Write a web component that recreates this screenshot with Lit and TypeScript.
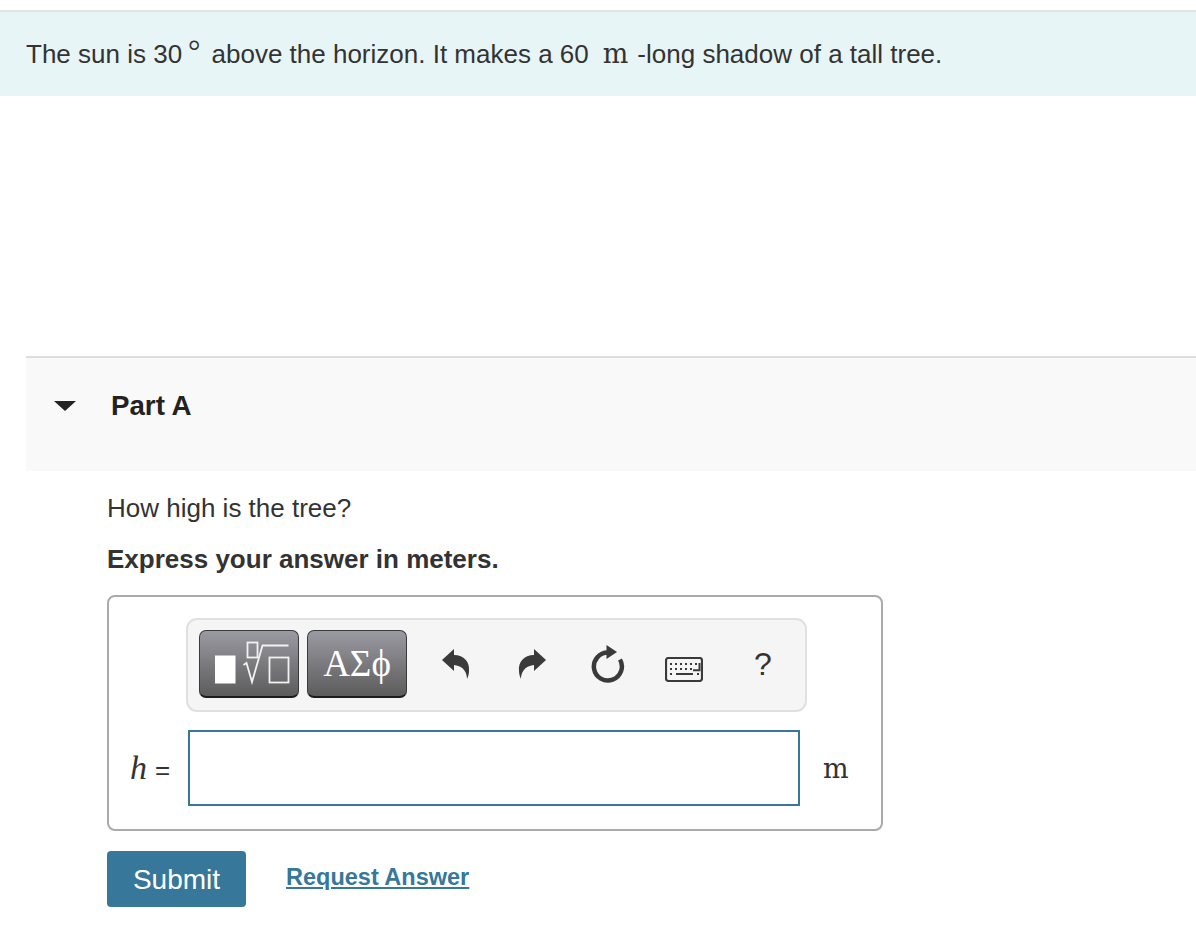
import { LitElement, html, css } from "lit";
import { customElement } from "lit/decorators.js";

@customElement("app-root")
export class AppRoot extends LitElement {
  static styles = css`
    :host { display: block; width: 1196px; height: 936px; overflow: hidden; background: #fff; padding-top: 10px; box-sizing: border-box; font-family: "Liberation Sans", Arial, sans-serif; color: #333; font-size: 26px; }
    .intro { border-top: 2px solid #e2e2e4; background: #e8f5f7; padding-left: 26px; display: flex; align-items: center; white-space: pre; line-height: 28px; box-sizing: border-box; height: 86px; }
    .deg { font-family: "Liberation Serif", serif; font-size: 31px; position: relative; top: -2px; margin-left: 6px; margin-right: 11px; }
    .mu { font-family: "DejaVu Serif", serif; font-size: 27px; margin-left: 14px; margin-right: 9px; }
    .part { margin: 260px 0 0 26px; height: 115px; box-sizing: border-box; border-top: 2px solid #ddd; background: #f9f9f9; display: flex; align-items: center; padding-bottom: 18px; color: #222; }
    .caret { width: 0; height: 0; margin-left: 28px; border-left: 11px solid transparent; border-right: 11px solid transparent; border-top: 10px solid #222; }
    .title { margin-left: 35px; font-weight: 700; font-size: 27.700px; }
    .body { padding-left: 107px; }
    .q { margin-top: 22px; line-height: 30px; }
    .ex { margin-top: 21px; line-height: 30px; font-weight: 700; }
    .box { margin-top: 21px; width: 776px; height: 236px; box-sizing: border-box; border: 2px solid #aaa; border-radius: 8px; padding: 21px 0 0 77px; }
    .tb { width: 621px; height: 94px; box-sizing: border-box; border: 2px solid #e0e0e0; border-radius: 11px; background: #f5f5f5; display: flex; align-items: center; padding: 0 0 2px 11px; }
    .btn { width: 100px; height: 68px; box-sizing: border-box; border: 1.500px solid #3a3a3a; border-bottom: 2px solid #1c1c1c; border-radius: 7px; background: linear-gradient(#9a9aa2, #5c5c5c); margin-right: 8px; display: flex; align-items: center; justify-content: center; color: #fff; font-family: "Liberation Serif", serif; font-size: 37px; line-height: 1; padding: 0; }
    .btn svg { display: block; flex: none; }
    .ic { display: block; flex: none; }
    .undo { margin-left: 27px; }
    .redo { margin-left: 48px; }
    .reload { margin-left: 45px; }
    .kbd { margin: 10px 0 0 40px; }
    .help { margin-left: 51px; padding-top: 1px; font-size: 32px; color: #333; }
    .row { display: flex; align-items: center; margin-top: 18px; margin-left: -77px; padding-left: 21px; }
    .h { width: 58px; display: flex; align-items: baseline; gap: 8px; }
    .h i { font-family: "Liberation Serif", serif; font-size: 34px; }
    .h span { font-size: 26px; }
    .field { width: 612px; height: 76px; box-sizing: border-box; border: 2px solid #37789a; background: #fff; }
    .unit { margin-left: 23px; font-family: "DejaVu Serif", serif; font-size: 27px; }
    .actions { margin-top: 20px; display: flex; align-items: center; }
    .submit { width: 139px; height: 56px; border: 0; border-radius: 4px; background: #37789a; color: #fff; font: 400 28px "Liberation Sans", Arial, sans-serif; padding: 2px 0 0; }
    .link { margin-left: 40px; color: #37789a; font-weight: 700; font-size: 23.500px; text-decoration: underline; position: relative; top: -2px; }
  `;

  render() {
    return html`
      <div class="intro">The sun is 30<span class="deg">°</span>above the horizon. It makes a 60<span class="mu">m</span>-long shadow of a tall tree.</div>
      <div class="part"><div class="caret"></div><div class="title">Part A</div></div>
      <div class="body">
        <div class="q">How high is the tree?</div>
        <div class="ex">Express your answer in meters.</div>
        <div class="box">
          <div class="tb">
            <div class="btn">
              <svg width="97" height="65" viewBox="0 0 97 65" fill="none">
                <rect x="14" y="24.500" width="20.500" height="28" fill="#fff"/>
                <rect x="46.500" y="11.500" width="10" height="15" stroke="#f2f2f2" stroke-width="1.800"/>
                <path d="M42.500 34l3-2 5.500 19 10.500-36.500h26" stroke="#f2f2f2" stroke-width="1.800"/>
                <rect x="68.500" y="26.500" width="19" height="25" stroke="#f2f2f2" stroke-width="1.800"/>
              </svg>
            </div>
            <div class="btn">ΑΣϕ</div>
            <svg class="ic undo" width="28" height="30" viewBox="0 0 28 30"><path fill="#3a3a3a" d="M0 11 12 0v6c10 0 16 7 15 16 0 3-1 6-2 8 0-6-3-13-13-14v6z"/></svg>
            <svg class="ic redo" width="28" height="30" viewBox="0 0 28 30"><path fill="#3a3a3a" d="M28 11 16 0v6C6 6 0 13 1 22c0 3 1 6 2 8 0-6 3-13 13-14v6z"/></svg>
            <svg class="ic reload" width="34" height="38" viewBox="0 0 34 38" fill="none"><path d="M17 7.500A14 14 0 1 0 29 14.500" stroke="#3a3a3a" stroke-width="4.500"/><path fill="#3a3a3a" d="M15.500 0l10.500 7-10.500 7z"/></svg>
            <svg class="ic kbd" width="38" height="25" viewBox="0 0 38 25" fill="none"><rect x="1" y="1" width="36" height="23" rx="2.500" stroke="#3a3a3a" stroke-width="2.200"/><path stroke="#3a3a3a" stroke-width="2" d="M5 7h2M10 7h2M15 7h2M20 7h2M25 7h2M30 7h2M5 12h2M10 12h2M15 12h2M20 12h2M25 12h2M5 17h2M11 17h17M32 17h2M34.500 6v7.200H28"/></svg>
            <div class="help">?</div>
          </div>
          <div class="row">
            <div class="h"><i>h</i><span>=</span></div>
            <div class="field"></div>
            <div class="unit">m</div>
          </div>
        </div>
        <div class="actions"><button class="submit">Submit</button><a class="link">Request Answer</a></div>
      </div>
    `;
  }
}
